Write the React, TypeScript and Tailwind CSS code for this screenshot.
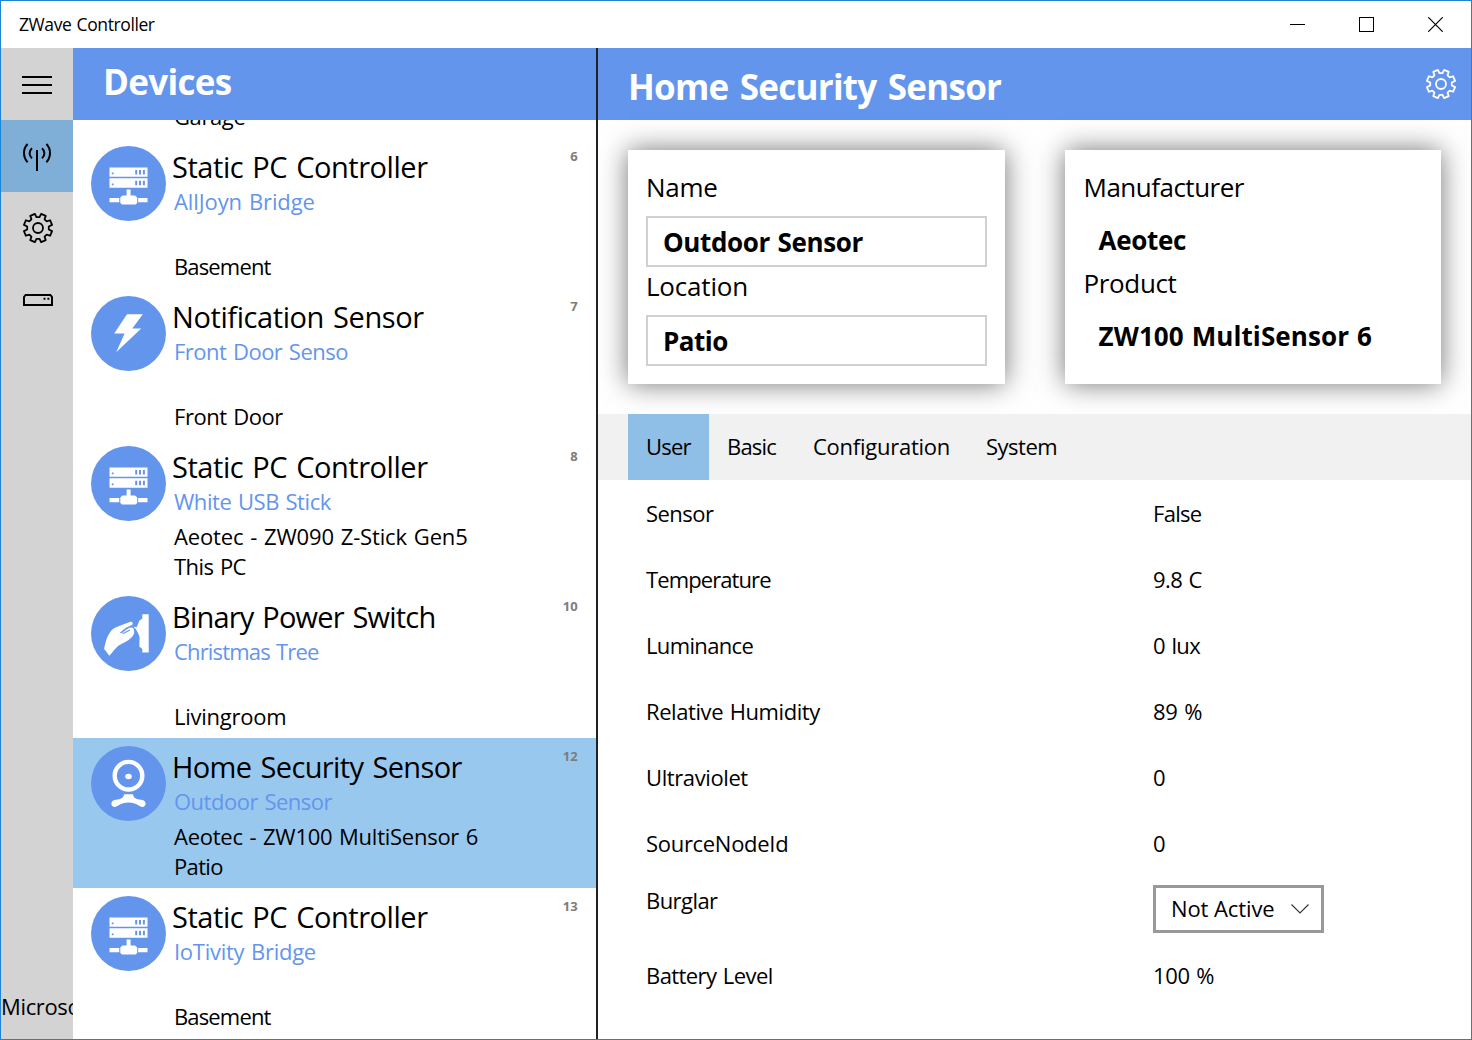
import React from 'react';

type IconKind = 'server' | 'bolt' | 'switch' | 'camera';

/* Outline of an eight-toothed gear centred on the origin. */
const gearPath = (() => {
  const pts: string[] = [];
  const at = (deg: number, r: number) => {
    const a = ((deg - 90) * Math.PI) / 180;
    return `${(r * Math.cos(a)).toFixed(2)} ${(r * Math.sin(a)).toFixed(2)}`;
  };
  for (let i = 0; i < 8; i++) {
    const n = i * 45;
    pts.push(at(n - 8, 10.9), at(n + 8, 10.9), at(n + 12.5, 14.4), at(n + 32.5, 14.4));
  }
  return `M${pts.join('L')}Z`;
})();

function Gear({ className }: { className?: string }) {
  return (
    <svg width="32" height="32" viewBox="-16 -16 32 32" fill="none" stroke="currentColor" strokeWidth="1.8" strokeLinejoin="round" className={className}>
      <path d={gearPath} />
      <circle r="5" />
    </svg>
  );
}

function Antenna() {
  return (
    <svg width="32" height="32" viewBox="0 0 32 32" fill="none" stroke="currentColor" strokeWidth="2">
      <path d="M16 10V31" />
      <path d="M6.6 4C1.8 9 1.8 17 6.6 22.2M25.4 4C30.2 9 30.2 17 25.4 22.2" />
      <path d="M11 8.2C7.8 11 7.8 15.5 11 18.2M21 8.2C24.2 11 24.2 15.5 21 18.2" />
    </svg>
  );
}

function Drive() {
  return (
    <svg width="30" height="12" viewBox="0 0 30 12" fill="none" stroke="currentColor" strokeWidth="2">
      <path d="M1 11V3L2.6 1H27.4L29 3V11Z" />
      <path d="M20.5 4.8H22.5M24.4 4.8H26.4" strokeWidth="1.9" />
    </svg>
  );
}

function DeviceIcon({ kind }: { kind: IconKind }) {
  return (
    <svg width="75" height="75" viewBox="0 0 75 75" fill="#fff" className="shrink-0">
      <circle cx="37.5" cy="37.5" r="37.5" fill="#6495ed" />
      {kind === 'server' && (
        <>
          <path d="M18.5 21.5H56.5V30.7H18.5ZM18.5 32.3H56.5V41.7H18.5Z" />
          <path d="M35.6 43.4H39.6V49.5H44L46.2 51.5V57L44.5 58.5H31L29.3 57V51.5L31.5 49.5H35.6Z" />
          <path d="M18.5 52H28.3V56.3H18.5ZM47.2 52H56.5V56.3H47.2Z" />
          <path
            fill="#6495ed"
            d="M44.2 24H46.2V28.5H44.2ZM48 24H50V28.5H48ZM51.9 24H53.9V28.5H51.9ZM44.2 34.8H46.2V39.3H44.2ZM48 34.8H50V39.3H48ZM51.9 34.8H53.9V39.3H51.9ZM20.8 26.5H22.6V28.3H20.8ZM20.8 37.4H22.6V39.2H20.8Z"
          />
        </>
      )}
      {kind === 'bolt' && <path d="M36 18.3H51.8L41.3 32.5H50.2L25.2 56.2L33.6 37.6H23.2Z" />}
      {kind === 'switch' && (
        <>
          <path d="M51.3 18.3H57.7V56.5H51.3V53L48.3 50.5L48.6 41.5C47.5 37 45.5 33.5 42.3 30.5L45.6 31.2L48.5 24.5L51.3 22.5Z" />
          <path d="M18.3 59.8L13 52.8L15.3 43.8C17.5 38 20 34 23.5 32C29 29.8 34 27.5 39.5 25.8C41.5 25.5 42.5 27.7 41 28.9L35 31.7L28.8 36.8L30.5 37.3L37 32.6C40 30.5 43.5 31.5 42.8 34C44 36 43 39 40.5 41.5C36.5 45.5 31 47.5 27.3 49.8C24 52.5 22 56 18.3 59.8Z" />
          <path d="M32 37.4L38.5 34.3" stroke="#6495ed" strokeWidth="1.1" strokeLinecap="round" />
        </>
      )}
      {kind === 'camera' && (
        <>
          <circle cx="37.5" cy="29.7" r="13.8" fill="none" stroke="#fff" strokeWidth="4.4" />
          <ellipse cx="37.5" cy="30.5" rx="3.3" ry="2.7" />
          <path d="M33 48.2H42C42.5 53.2 47 53 52 54.2C55.6 55.4 55.4 60.4 51.8 60.9C48 61.2 46.5 56.4 37.5 56.4C28.5 56.4 27 61.2 23.2 60.9C19.6 60.4 19.4 55.4 23 54.2C28 53 32.5 53.2 33 48.2Z" />
        </>
      )}
    </svg>
  );
}

type Device = {
  id: string;
  icon: IconKind;
  title: string;
  titleCls: string;
  name: string;
  nameCls: string;
  product?: string;
  productCls?: string;
  place: string;
  placeCls: string;
  selected?: boolean;
};

const devices: Device[] = [
  { id: '', icon: 'bolt', title: '', titleCls: '', name: '', nameCls: '', place: 'Garage', placeCls: 'tracking-[-0.4px]' },
  { id: '6', icon: 'server', title: 'Static PC Controller', titleCls: 'tracking-[-0.45px]', name: 'AllJoyn Bridge', nameCls: 'tracking-[-0.1px]', place: 'Basement', placeCls: 'tracking-[-0.85px]' },
  { id: '7', icon: 'bolt', title: 'Notification Sensor', titleCls: 'tracking-[-0.41px]', name: 'Front Door Senso', nameCls: 'tracking-[-0.5px]', place: 'Front Door', placeCls: 'tracking-[-0.45px]' },
  { id: '8', icon: 'server', title: 'Static PC Controller', titleCls: 'tracking-[-0.45px]', name: 'White USB Stick', nameCls: 'tracking-[-0.44px]', product: 'Aeotec - ZW090 Z-Stick Gen5', productCls: 'tracking-[-0.15px]', place: 'This PC', placeCls: 'tracking-[-0.55px]' },
  { id: '10', icon: 'switch', title: 'Binary Power Switch', titleCls: 'tracking-[-0.8px]', name: 'Christmas Tree', nameCls: 'tracking-[-0.83px]', place: 'Livingroom', placeCls: 'tracking-[-0.25px]' },
  { id: '12', icon: 'camera', title: 'Home Security Sensor', titleCls: 'tracking-[-0.61px]', name: 'Outdoor Sensor', nameCls: 'tracking-[-0.5px]', product: 'Aeotec - ZW100 MultiSensor 6', productCls: 'tracking-[-0.26px]', place: 'Patio', placeCls: 'tracking-[-0.65px]', selected: true },
  { id: '13', icon: 'server', title: 'Static PC Controller', titleCls: 'tracking-[-0.45px]', name: 'IoTivity Bridge', nameCls: 'tracking-[-0.27px]', place: 'Basement', placeCls: 'tracking-[-0.85px]' },
];

function DeviceRow({ d }: { d: Device }) {
  return (
    <li className={`flex h-[150px] shrink-0 pt-2 pr-[18px] pl-[18px] whitespace-nowrap ${d.selected ? 'bg-[#99c8ef]' : ''}`}>
      <DeviceIcon kind={d.icon} />
      <div className="ml-[6px] flex flex-1 flex-col [word-spacing:1.3px]">
        <div className="flex h-10 justify-between">
          <span className={`text-[29px] leading-[42px] [word-spacing:2px] ${d.titleCls}`}>{d.title}</span>
          <span className="mt-px text-[13px] leading-[18px] font-bold tracking-[0.2px] text-[#7d7d7d]">{d.id}</span>
        </div>
        <span className={`ml-[2px] h-[30px] text-[22px] leading-[30px] text-[#6495ed] ${d.nameCls}`}>{d.name}</span>
        <span className={`mt-[5px] ml-[2px] h-[30px] text-[22px] leading-[30px] ${d.productCls ?? ''}`}>{d.product}</span>
        <span className={`ml-[2px] h-[30px] text-[22px] leading-[30px] ${d.placeCls}`}>{d.place}</span>
      </div>
    </li>
  );
}

const properties: [string, string, string, string][] = [
  ['Sensor', 'tracking-[-0.55px]', 'False', 'tracking-[-0.7px]'],
  ['Temperature', 'tracking-[-0.9px]', '9.8 C', 'tracking-[-0.6px]'],
  ['Luminance', 'tracking-[-0.65px]', '0 lux', 'tracking-[-0.6px]'],
  ['Relative Humidity', 'tracking-[-0.42px]', '89 %', 'tracking-[-0.3px]'],
  ['Ultraviolet', 'tracking-[-0.4px]', '0', ''],
  ['SourceNodeId', 'tracking-[-0.3px]', '0', ''],
];

export default function App() {
  return (
    <div className="flex h-[1040px] w-[1472px] flex-col overflow-hidden border border-[#1c84d6] bg-white font-['Open_Sans',sans-serif] text-black">
      <header className="flex h-[47px] shrink-0 items-center justify-between pl-[18px]">
        <h1 className="pb-[2px] text-[17.5px] leading-[24px] tracking-[-0.4px] [word-spacing:1px]">ZWave Controller</h1>
        <div className="mr-[28px] flex gap-[54px]">
          <svg width="15" height="15" stroke="#000" fill="none" shapeRendering="crispEdges"><path d="M0 7.5H15" /></svg>
          <svg width="15" height="15" stroke="#000" fill="none" shapeRendering="crispEdges"><path d="M.5.5H14.5V14.5H.5Z" /></svg>
          <svg width="15" height="15" stroke="#000" fill="none" strokeWidth="1.2"><path d="M.3.3L14.7 14.7M14.7.3L.3 14.7" /></svg>
        </div>
      </header>

      <div className="flex min-h-0 flex-1">
        <nav className="flex w-[72px] shrink-0 flex-col overflow-hidden bg-[#d3d3d3]">
          <button className="flex h-[72px] flex-col items-center justify-center gap-[6px] pt-[2px]">
            <span className="h-[2px] w-[30px] bg-black" />
            <span className="h-[2px] w-[30px] bg-black" />
            <span className="h-[2px] w-[30px] bg-black" />
          </button>
          <button className="flex h-[72px] items-center justify-center bg-[#7faed6]">
            <Antenna />
          </button>
          <button className="flex h-[72px] items-center justify-center pl-[2px]">
            <Gear />
          </button>
          <button className="flex h-[72px] items-center justify-center pl-[2px]">
            <Drive />
          </button>
          <span className="mt-auto mb-[18px] text-[22px] leading-[30px] tracking-[-0.35px] whitespace-nowrap">Microsoft</span>
        </nav>

        <section className="flex w-[523px] shrink-0 flex-col overflow-hidden">
          <div className="z-10 h-[72px] shrink-0 bg-[#6495ed] pt-[9px] pl-[30px]">
            <h2 className="text-[35px] leading-[50px] font-bold tracking-[-0.7px] text-white">Devices</h2>
          </div>
          <ul className="-mt-[132px] flex flex-col">
            {devices.map((d, i) => (
              <DeviceRow key={i} d={d} />
            ))}
          </ul>
        </section>

        <div className="w-[2px] shrink-0 bg-[#222]" />

        <main className="flex min-w-0 flex-1 flex-col">
          <div className="flex h-[72px] shrink-0 items-center justify-between bg-[#6495ed] pr-[14px] pl-[30px] text-white">
            <h2 className="pt-[5px] text-[35px] leading-[50px] font-bold tracking-[-0.75px] [word-spacing:3px]">Home Security Sensor</h2>
            <Gear />
          </div>

          <div className="grid h-[294px] shrink-0 grid-cols-2 gap-[60px] p-[30px]">
            <div className="flex flex-col bg-white px-[18px] pt-[19px] shadow-[0_0_26px_rgba(0,0,0,0.55)]">
              <label className="text-[26px] leading-[36px] tracking-[-0.3px]">Name</label>
              <div className="mt-[11px] flex h-[51px] items-center border-2 border-[#d0d0d0] pt-[2px] pl-[15px] text-[26px] font-bold tracking-[-0.35px] [word-spacing:1px]">Outdoor Sensor</div>
              <label className="mt-[1px] text-[26px] leading-[36px] tracking-[-0.2px]">Location</label>
              <div className="mt-[11px] flex h-[51px] items-center border-2 border-[#d0d0d0] pt-[2px] pl-[15px] text-[26px] font-bold tracking-[-0.5px]">Patio</div>
            </div>
            <div className="flex flex-col bg-white pt-[19px] pl-[19px] shadow-[0_0_26px_rgba(0,0,0,0.55)]">
              <span className="text-[26px] leading-[36px] tracking-[-0.5px]">Manufacturer</span>
              <span className="mt-[17px] pl-[15px] text-[26px] leading-[36px] font-bold tracking-[-0.3px]">Aeotec</span>
              <span className="mt-[7px] text-[26px] leading-[36px] tracking-[-0.35px]">Product</span>
              <span className="mt-[17px] pl-[15px] text-[26px] leading-[36px] font-bold tracking-[0.1px] [word-spacing:1px]">ZW100 MultiSensor 6</span>
            </div>
          </div>

          <div className="flex h-[66px] shrink-0 bg-[#f1f1f1] pl-[30px] text-[22px] leading-[64px] whitespace-nowrap">
            <span className="w-[81px] bg-[#8fbfe7] pl-[18px] tracking-[-0.8px]">User</span>
            <span className="w-[86px] pl-[18px] tracking-[-0.8px]">Basic</span>
            <span className="w-[173px] pl-[18px] tracking-[-0.25px]">Configuration</span>
            <span className="pl-[18px] tracking-[-0.5px]">System</span>
          </div>

          <dl className="grid auto-rows-[66px] grid-cols-[507px_1fr] pl-[48px] text-[22px] leading-[66px] [word-spacing:1.3px]">
            {properties.map(([label, labelCls, value, valueCls]) => (
              <React.Fragment key={label}>
                <dt className={labelCls}>{label}</dt>
                <dd className={valueCls}>{value}</dd>
              </React.Fragment>
            ))}
            <dt className="pt-[7px] leading-[34px] tracking-[-0.55px]">Burglar</dt>
            <dd className="flex items-center">
              <button className="flex h-[48px] w-[171px] items-center justify-between border-[3px] border-[#999] pr-[12px] pl-[15px] leading-[42px] tracking-[-0.1px]">
                <span className="pb-[2px] leading-[40px]">Not Active</span>
                <svg width="18" height="10" viewBox="0 0 18 10" fill="none" stroke="#333" strokeWidth="1.1"><path d="M.5.5L9 9L17.5.5" /></svg>
              </button>
            </dd>
            <dt className="tracking-[-0.58px]">Battery Level</dt>
            <dd className="tracking-[-0.35px]">100 %</dd>
          </dl>
        </main>
      </div>
    </div>
  );
}
